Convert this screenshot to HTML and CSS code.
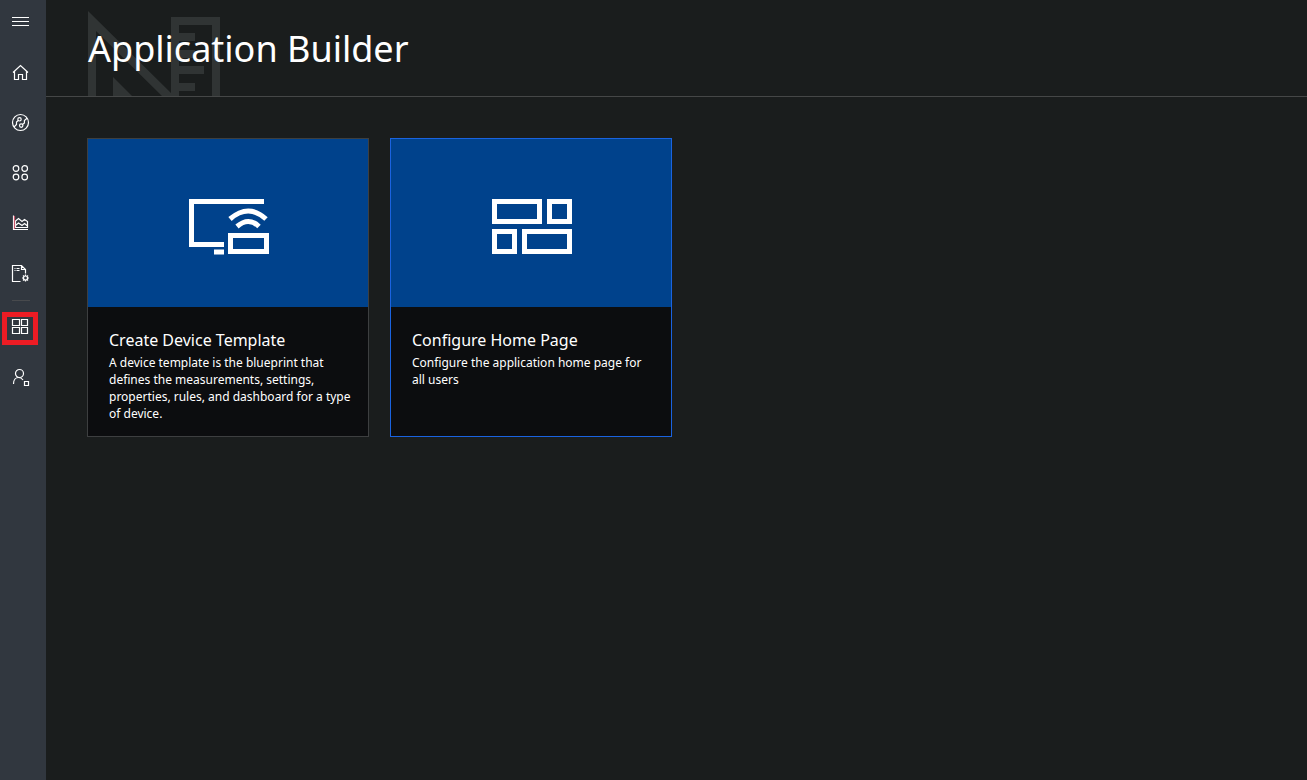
FILE: index.html
```html
<!DOCTYPE html>
<html lang="en">
<head>
<meta charset="utf-8">
<title>Application Builder</title>
<meta name="viewport" content="width=device-width, initial-scale=1">
<link rel="stylesheet" href="styles.css">
</head>
<body>
<div class="app">
  <nav class="sidebar" aria-label="Main">
    <button class="menu" type="button" aria-label="Toggle navigation">
      <svg class="icon" viewBox="0 0 20 20"><path d="M2 5.500h17M2 9.500h17M2 13.500h17"/></svg>
    </button>
    <a class="item" href="#home" aria-label="Home">
      <svg class="icon" viewBox="0 0 20 20"><path d="M3 9.500 10.500 2.500 18 9.500M4.500 8.500v8h4v-5h4v5h4v-8"/></svg>
    </a>
    <a class="item" href="#explorer" aria-label="Device explorer">
      <svg class="icon" viewBox="0 0 20 20"><circle cx="10.500" cy="9.500" r="8"/><circle cx="9.500" cy="6.300" r="1.700"/><circle cx="11.200" cy="12.600" r="1.700"/><path d="M8.200 7.500 6.500 9v2.500L4 14M12.500 11.400l1.900-1.400V7.600L17 5.200"/></svg>
    </a>
    <a class="item" href="#sets" aria-label="Device sets">
      <svg class="icon" viewBox="0 0 20 20"><circle cx="6" cy="5.500" r="2.800"/><circle cx="14.700" cy="5.500" r="2.800"/><circle cx="6" cy="14" r="2.800"/><circle cx="14.700" cy="14" r="2.800"/></svg>
    </a>
    <a class="item" href="#analytics" aria-label="Analytics">
      <svg class="icon" viewBox="0 0 20 20"><path d="M3.500 2.500v14H18M5.500 14.500V8l3-2.500 3.500 3 2.500-2 3 2v6zM5.500 12.500l3-2.500 3.500 2.500 2.500-2 3 2.500"/><path class="tint" d="M4.500 3v13"/></svg>
    </a>
    <a class="item" href="#jobs" aria-label="Jobs">
      <svg class="icon" viewBox="0 0 20 20"><path d="M10.500 18.500h-8v-16h9l4 4v4M11.500 2.500v4h4M4.500 5.500h1M6.500 5.500h3M4.500 7.500h1M6.500 7.500h3"/><circle cx="15.500" cy="15" r="2"/><path d="M15.500 11.500V13M15.500 17v1.500M12 15h1.500M17.500 15H19M13 12.500l1 1M17 16.500l1 1M18 12.500l-1 1M14 16.500l-1 1"/></svg>
    </a>
    <hr class="divider">
    <a class="item current" href="#builder" aria-label="Application builder" aria-current="page">
      <svg class="icon" viewBox="0 0 20 20"><path d="M2.500 2.500h7v6h-7zM11.500 2.500h6v6h-6zM2.500 10.500h7v6h-7zM11.500 10.500h6v6h-6z"/></svg>
    </a>
    <a class="item" href="#admin" aria-label="Administration">
      <svg class="icon" viewBox="0 0 20 20"><circle cx="9.500" cy="6.500" r="4"/><path d="M3.500 17c0-4 2.300-6.500 5-6.500 2 0 3.500.8 4.500 2.500M14.500 14.500h4v4h-4z"/></svg>
    </a>
  </nav>
  <main class="main">
    <header class="header">
      <svg class="emblem" viewBox="0 0 134 85" aria-hidden="true"><path fill-rule="evenodd" d="M0 0 83 82V6h49v79h-8V14H91v8h16v8H91v9h16v8H91v8h25v8H91v9h16v8H91v5H74L8 20v65H0zM25 66 44 85H25z"/></svg>
      <h1 class="title">Application Builder</h1>
    </header>
    <section class="cards" aria-label="Builder actions">
      <a class="card" href="#device-template">
        <span class="art"><svg class="art-icon" viewBox="0 0 82 58"><path d="M77 3.500H4.500v43H37M27 54h10M43.500 37.500h36v16h-36z"/><path d="M43 21q18.500-16 36 0M50 28.500q11.500-10 22 0"/></svg></span>
        <span class="body"><strong class="name">Create Device Template</strong><span class="text">A device template is the blueprint that defines the measurements, settings, properties, rules, and dashboard for a type of device.</span></span>
      </a>
      <a class="card selected" href="#home-page">
        <span class="art"><svg class="art-icon" viewBox="0 0 82 58"><path d="M4.500 3.500h45v20h-45zM59.500 3.500h20v20h-20zM4.500 33.500h20v20h-20zM34.500 33.500h45v20h-45z"/></svg></span>
        <span class="body"><strong class="name">Configure Home Page</strong><span class="text">Configure the application home page for all users</span></span>
      </a>
    </section>
  </main>
</div>
</body>
</html>
```
FILE: styles.css
```css
* {
  box-sizing: border-box;
}

body {
  margin: 0;
  background: #1a1d1d;
  color: #fff;
  font-family: "Noto Sans", "Open Sans", sans-serif;
}

.app {
  display: flex;
  min-height: 100vh;
}

.sidebar {
  flex: none;
  width: 46px;
  background: #31373f;
}

.menu,
.item {
  position: relative;
  display: flex;
  align-items: center;
  justify-content: center;
  width: 40px;
  height: 50px;
}

.menu {
  height: 44px;
  margin: 0 0 4px;
  padding: 0;
  border: 0;
  background: none;
}

.icon {
  width: 20px;
  height: 20px;
  fill: none;
  stroke: #fff;
  stroke-width: 1.2;
}

.icon .tint {
  stroke: #c8546a;
}

.divider {
  width: 18px;
  height: 1px;
  margin: 2px 0 1px 12px;
  border: 0;
  background: #484a4d;
}

.current::after {
  content: "";
  position: absolute;
  inset: 10px 2px 7px;
  border: 5px solid #ed1c24;
}

.main {
  flex: 1;
  min-width: 0;
}

.header {
  position: relative;
  display: flex;
  align-items: center;
  height: 97px;
  padding: 2px 42px 0;
  border-bottom: 1px solid #454747;
}

.emblem {
  position: absolute;
  left: 42px;
  bottom: 0;
  width: 134px;
  height: 85px;
  fill: #303434;
}

.title {
  position: relative;
  margin: 0;
  font-size: 36px;
  font-weight: 400;
  line-height: 48px;
}

.cards {
  display: flex;
  flex-wrap: wrap;
  gap: 21px;
  padding: 41px;
}

.card {
  display: flex;
  flex-direction: column;
  width: 282px;
  min-height: 299px;
  border: 1px solid #3d3f40;
  background: #0c0d0f;
  color: #fff;
  text-decoration: none;
}

.card.selected {
  border-color: #1a63e0;
}

.art {
  display: flex;
  align-items: center;
  justify-content: center;
  height: 168px;
  padding-top: 8px;
  background: #00428c;
}

.art-icon {
  width: 82px;
  height: 58px;
  fill: none;
  stroke: #fff;
  stroke-width: 5;
}

.body {
  display: flex;
  flex-direction: column;
  padding: 21px 16px 12px 21px;
}

.name {
  font-size: 16px;
  font-weight: 400;
  line-height: 24px;
  margin-bottom: 2px;
}

.text {
  font-size: 12px;
  line-height: 17px;
}
```
